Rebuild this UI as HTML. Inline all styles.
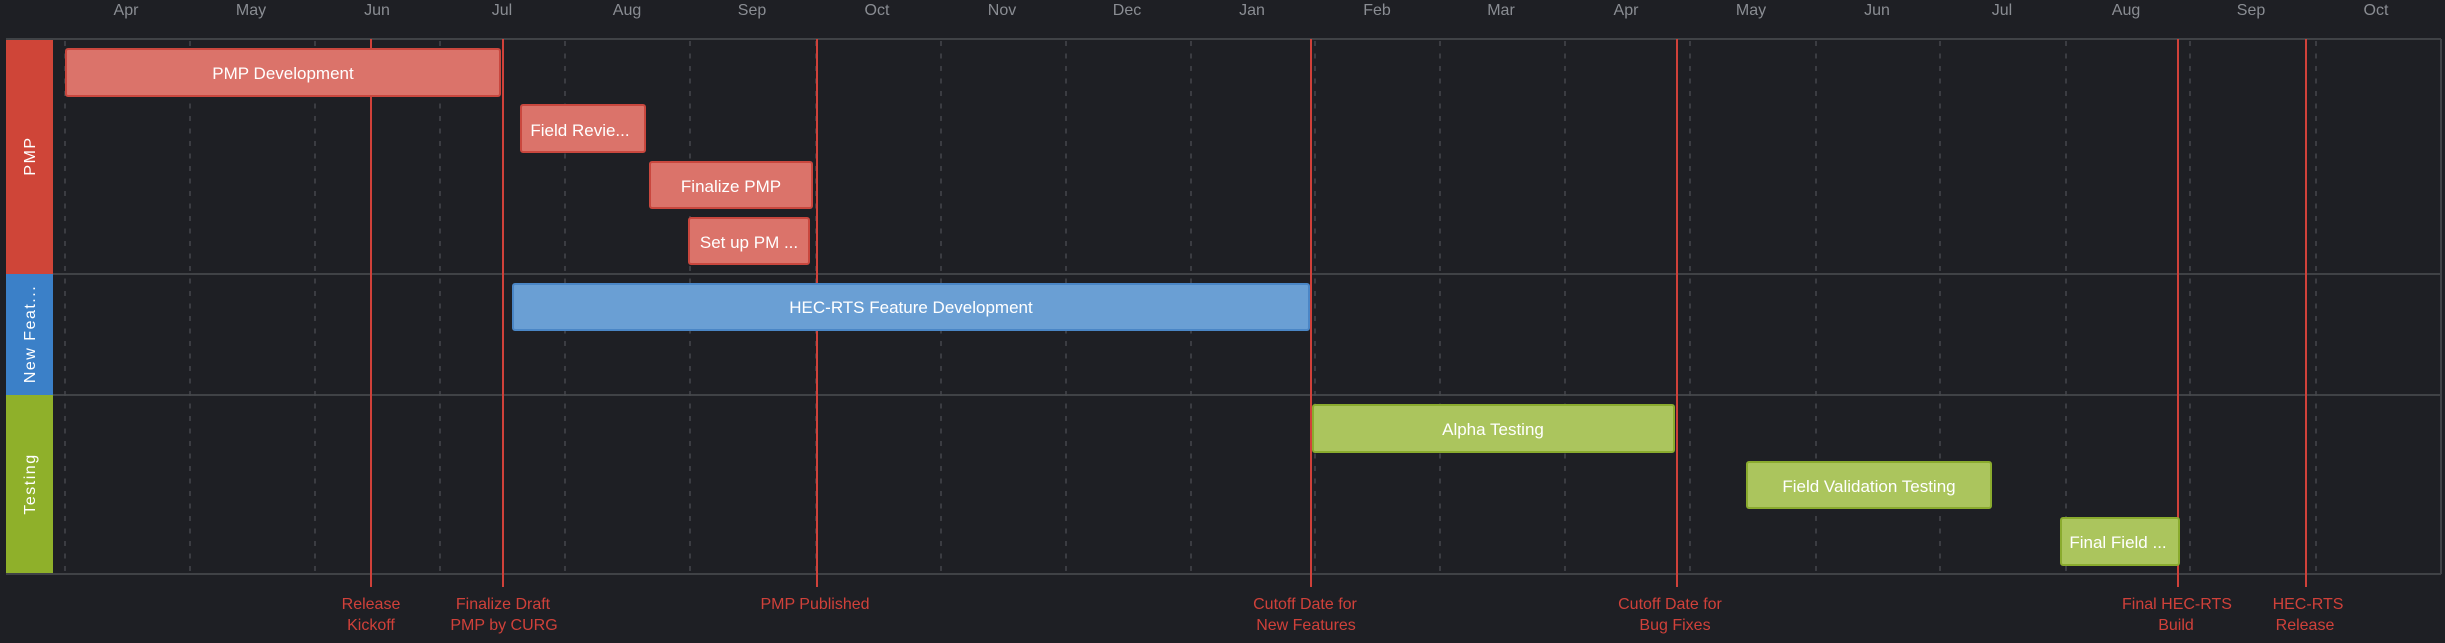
<!DOCTYPE html>
<html><head><meta charset="utf-8"><style>
html,body{margin:0;padding:0;background:#1e1f24;}
svg{display:block}
</style></head><body>
<svg width="2445" height="643" viewBox="0 0 2445 643" xmlns="http://www.w3.org/2000/svg" font-family="Liberation Sans, sans-serif">
<rect width="2445" height="643" fill="#1e1f24"/>
<!-- month labels -->
<g fill="#8a8d93" font-size="16" text-anchor="middle">
<text x="126" y="15">Apr</text><text x="251" y="15">May</text><text x="377" y="15">Jun</text><text x="502" y="15">Jul</text><text x="627" y="15">Aug</text><text x="752" y="15">Sep</text><text x="877" y="15">Oct</text><text x="1002" y="15">Nov</text><text x="1127" y="15">Dec</text><text x="1252" y="15">Jan</text><text x="1377" y="15">Feb</text><text x="1501" y="15">Mar</text><text x="1626" y="15">Apr</text><text x="1751" y="15">May</text><text x="1877" y="15">Jun</text><text x="2002" y="15">Jul</text><text x="2126" y="15">Aug</text><text x="2251" y="15">Sep</text><text x="2376" y="15">Oct</text>
</g>
<!-- lane headers -->
<rect x="6" y="39" width="47" height="235" fill="#cf4538"/>
<rect x="6" y="274" width="47" height="121" fill="#3b80c8"/>
<rect x="6" y="395" width="47" height="179" fill="#8fb02a"/>
<g fill="#fff" font-size="16" letter-spacing="1.5" text-anchor="middle">
<text transform="translate(35,156) rotate(-90)">PMP</text>
<text transform="translate(35,334) rotate(-90)">New Feat...</text>
<text transform="translate(35,484) rotate(-90)">Testing</text>
</g>
<!-- lane lines -->
<g stroke="#404246" stroke-width="2" fill="none">
<line x1="6" y1="39" x2="2441" y2="39"/>
<line x1="53" y1="274" x2="2441" y2="274"/>
<line x1="53" y1="395" x2="2441" y2="395"/>
<line x1="6" y1="574" x2="2441" y2="574"/>
<line x1="2441" y1="39" x2="2441" y2="574"/>
</g>
<!-- dashed month lines -->
<g stroke="#45474c" stroke-width="1.5" stroke-dasharray="5 7.5">
<line x1="65" y1="41" x2="65" y2="572"/><line x1="190" y1="41" x2="190" y2="572"/><line x1="315" y1="41" x2="315" y2="572"/><line x1="440" y1="41" x2="440" y2="572"/><line x1="565" y1="41" x2="565" y2="572"/><line x1="690" y1="41" x2="690" y2="572"/><line x1="816" y1="41" x2="816" y2="572"/><line x1="941" y1="41" x2="941" y2="572"/><line x1="1066" y1="41" x2="1066" y2="572"/><line x1="1191" y1="41" x2="1191" y2="572"/><line x1="1315" y1="41" x2="1315" y2="572"/><line x1="1440" y1="41" x2="1440" y2="572"/><line x1="1565" y1="41" x2="1565" y2="572"/><line x1="1690" y1="41" x2="1690" y2="572"/><line x1="1816" y1="41" x2="1816" y2="572"/><line x1="1940" y1="41" x2="1940" y2="572"/><line x1="2066" y1="41" x2="2066" y2="572"/><line x1="2190" y1="41" x2="2190" y2="572"/><line x1="2316" y1="41" x2="2316" y2="572"/>
</g>
<!-- red milestone lines -->
<g stroke="#d0413a" stroke-width="2">
<line x1="371" y1="39" x2="371" y2="587"/><line x1="503" y1="39" x2="503" y2="587"/><line x1="817" y1="39" x2="817" y2="587"/><line x1="1311" y1="39" x2="1311" y2="587"/><line x1="1677" y1="39" x2="1677" y2="587"/><line x1="2178" y1="39" x2="2178" y2="587"/><line x1="2306" y1="39" x2="2306" y2="587"/>
</g>
<!-- bars -->
<g stroke-width="2">
<rect x="66" y="49" width="434" height="47" rx="2" fill="#db736a" stroke="#c9473e"/>
<rect x="521" y="105" width="124" height="47" rx="2" fill="#db736a" stroke="#c9473e"/>
<rect x="650" y="162" width="162" height="46" rx="2" fill="#db736a" stroke="#c9473e"/>
<rect x="689" y="218" width="120" height="46" rx="2" fill="#db736a" stroke="#c9473e"/>
<rect x="513" y="284" width="796" height="46" rx="2" fill="#6a9fd4" stroke="#4a86c6"/>
<rect x="1313" y="405" width="361" height="47" rx="2" fill="#abc55d" stroke="#8aab2e"/>
<rect x="1747" y="462" width="244" height="46" rx="2" fill="#abc55d" stroke="#8aab2e"/>
<rect x="2061" y="518" width="118" height="47" rx="2" fill="#abc55d" stroke="#8aab2e"/>
</g>
<g fill="#fff" font-size="17" text-anchor="middle">
<text x="283" y="79">PMP Development</text>
<text x="580" y="136">Field Revie...</text>
<text x="731" y="192">Finalize PMP</text>
<text x="749" y="248">Set up PM ...</text>
<text x="911" y="313">HEC-RTS Feature Development</text>
<text x="1493" y="435">Alpha Testing</text>
<text x="1869" y="492">Field Validation Testing</text>
<text x="2118" y="548">Final Field ...</text>
</g>
<!-- milestone labels -->
<g fill="#d0413a" font-size="16" text-anchor="middle">
<text x="371" y="609">Release</text><text x="371" y="630">Kickoff</text>
<text x="503" y="609">Finalize Draft</text><text x="504" y="630">PMP by CURG</text>
<text x="815" y="609">PMP Published</text>
<text x="1305" y="609">Cutoff Date for</text><text x="1306" y="630">New Features</text>
<text x="1670" y="609">Cutoff Date for</text><text x="1675" y="630">Bug Fixes</text>
<text x="2177" y="609">Final HEC-RTS</text><text x="2176" y="630">Build</text>
<text x="2308" y="609">HEC-RTS</text><text x="2305" y="630">Release</text>
</g>
</svg>
</body></html>
